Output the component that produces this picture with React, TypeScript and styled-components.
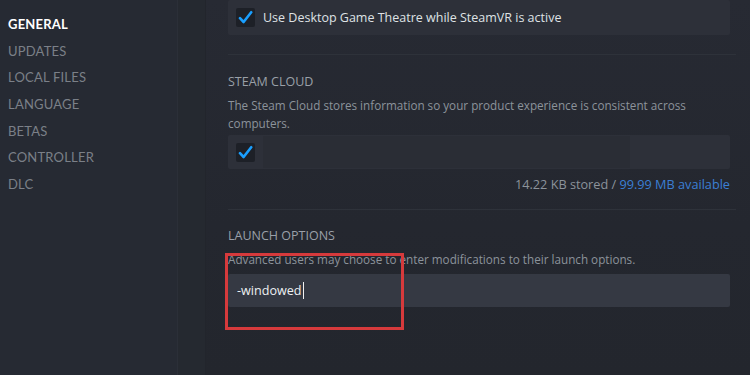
import styled, { createGlobalStyle } from 'styled-components';

const Global = createGlobalStyle`
	html, body {
		margin: 0;
		padding: 0;
		background: #24272f;
	}
	#root {
		width: 750px;
		height: 375px;
		overflow: hidden;
	}
`;

const Page = styled.div`
	display: flex;
	width: 750px;
	height: 375px;
	font-family: 'Open Sans', 'Noto Sans', sans-serif;
	background: #24272f;
`;

const Sidebar = styled.nav`
	width: 177px;
	flex-shrink: 0;
	background: #262a33;
	border-right: 1px solid #2b2f38;
	padding-top: 15px;
	display: flex;
	flex-direction: column;
`;

const NavItem = styled.div<{ active?: boolean }>`
	font-family: Lato, 'Open Sans', sans-serif;
	font-size: 13px;
	line-height: 18px;
	height: 26.7px;
	padding-left: 8px;
	letter-spacing: 0.2px;
	font-weight: ${(p) => (p.active ? 700 : 400)};
	color: ${(p) => (p.active ? '#ffffff' : '#7b8088')};
`;

const Gutter = styled.div`
	width: 27px;
	flex-shrink: 0;
	background: #252930;
	border-right: 1px solid #22252c;
`;

const Main = styled.main`
	flex: 1;
	padding: 0 20px 0 22px;
	position: relative;
	background: linear-gradient(180deg, #272a33 0%, #24272f 60%, #23262d 100%);
`;

const Panel = styled.div<{ height: number; top?: number }>`
	height: ${(p) => p.height}px;
	margin-top: ${(p) => p.top ?? 0}px;
	background: #2d3039;
	border-radius: 2px;
	display: flex;
	align-items: center;
	padding-left: 8px;
	gap: 8px;
`;

const Check = styled.div`
	width: 19px;
	height: 19px;
	background: #1d2027;
	border-radius: 2px;
	display: flex;
	align-items: center;
	justify-content: center;
	flex-shrink: 0;
`;

const Label = styled.span`
	font-size: 12.5px;
	color: #dfe2e5;
`;

const CloudBar = styled.div`
	align-self: stretch;
	width: 367px;
	margin: 1px 0;
	background: #2a2d35;
`;

const Divider = styled.div<{ top: number }>`
	height: 1px;
	margin-top: ${(p) => p.top}px;
	margin-right: -6px;
	background: #2e323a;
`;

const Heading = styled.div<{ top: number }>`
	margin-top: ${(p) => p.top}px;
	font-size: 12.5px;
	line-height: 18px;
	color: #9aa0a8;
	text-transform: uppercase;
`;

const Desc = styled.div`
	margin-top: 5px;
	max-width: 470px;
	font-size: 11.7px;
	line-height: 18px;
	color: #8c939b;
`;

const Storage = styled.div`
	margin-top: 6px;
	text-align: right;
	font-size: 12.7px;
	line-height: 18px;
	color: #8c939b;
	a {
		color: #3b7fd4;
		text-decoration: none;
	}
`;

const Input = styled.div`
	margin-top: 6px;
	height: 33px;
	background: #353943;
	border-radius: 2px;
	display: flex;
	align-items: center;
	padding-left: 9px;
	font-size: 12.6px;
	color: #eef0f2;
`;

const Caret = styled.span`
	display: inline-block;
	width: 1px;
	height: 17px;
	margin-left: 1px;
	background: #f0f0f0;
`;

const Highlight = styled.div`
	position: absolute;
	left: 19px;
	top: 253px;
	width: 173px;
	height: 71px;
	border: 3px solid #d63a3c;
	pointer-events: none;
`;

const Tick = () => (
	<svg width='15' height='15' viewBox='0 0 15 15'>
		<path
			d='M2 8.2 L5.6 12 L13.2 2.2'
			fill='none'
			stroke='#1a9fff'
			strokeWidth='2.6'
			strokeLinecap='round'
			strokeLinejoin='round'
		/>
	</svg>
);

const navItems = ['General', 'Updates', 'Local Files', 'Language', 'Betas', 'Controller', 'DLC'];

const App = () => {
	return (
		<Page>
			<Global />
			<Sidebar>
				{navItems.map((item, i) => (
					<NavItem key={item} active={i === 0}>
						{item.toUpperCase()}
					</NavItem>
				))}
			</Sidebar>
			<Gutter />
			<Main>
				<Panel height={35}>
					<Check>
						<Tick />
					</Check>
					<Label>Use Desktop Game Theatre while SteamVR is active</Label>
				</Panel>
				<Divider top={19} />

				<Heading top={18}>Steam Cloud</Heading>
				<Desc>
					The Steam Cloud stores information so your product experience is consistent across computers.
				</Desc>
				<Panel height={34} top={3}>
					<Check>
						<Tick />
					</Check>
					<CloudBar />
				</Panel>
				<Storage>
					14.22 KB stored / <a href='#'>99.99 MB available</a>
				</Storage>
				<Divider top={16} />

				<Heading top={17}>Launch Options</Heading>
				<Desc>Advanced users may choose to enter modifications to their launch options.</Desc>
				<Input>
					-windowed
					<Caret />
				</Input>
				<Highlight />
			</Main>
		</Page>
	);
};

export default App;
